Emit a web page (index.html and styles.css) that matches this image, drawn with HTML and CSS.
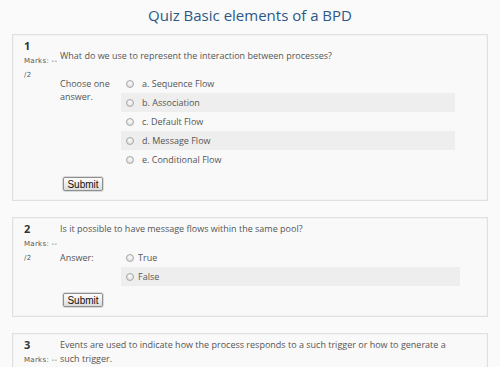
FILE: index.html
```html
<!DOCTYPE html>
<html>
<head>
<meta charset="utf-8">
<link rel="stylesheet" href="styles.css">
</head>
<body>
<h2 class="title">Quiz Basic elements of a BPD</h2>

<div class="que">
  <div class="info">
    <div class="no">1</div>
    <div class="grade">Marks: --<br>/2</div>
  </div>
  <div class="content">
    <div class="qtext qtext-low">What do we use to represent the interaction between processes?</div>
    <div class="ablock ablock-first">
      <div class="prompt">Choose one<br>answer.</div>
      <div class="answer">
        <div class="opt"><span class="radio"></span><span class="label">a. Sequence Flow</span></div>
        <div class="opt opt-alt"><span class="radio"></span><span class="label">b. Association</span></div>
        <div class="opt"><span class="radio"></span><span class="label">c. Default Flow</span></div>
        <div class="opt opt-alt"><span class="radio"></span><span class="label">d. Message Flow</span></div>
        <div class="opt"><span class="radio"></span><span class="label">e. Conditional Flow</span></div>
      </div>
    </div>
    <div class="submit"><button class="btn">Submit</button></div>
  </div>
</div>

<div class="que">
  <div class="info">
    <div class="no">2</div>
    <div class="grade">Marks: --<br>/2</div>
  </div>
  <div class="content">
    <div class="qtext">Is it possible to have message flows within the same pool?</div>
    <div class="ablock ablock-tf">
      <div class="prompt">Answer:</div>
      <div class="answer answer-tf">
        <div class="opt"><span class="radio radio-tf"></span><span class="label">True</span></div>
        <div class="opt opt-alt"><span class="radio radio-tf"></span><span class="label">False</span></div>
      </div>
    </div>
    <div class="submit submit-tf"><button class="btn">Submit</button></div>
  </div>
</div>

<div class="que">
  <div class="info">
    <div class="no">3</div>
    <div class="grade">Marks: --<br>/2</div>
  </div>
  <div class="content">
    <div class="qtext">Events are used to indicate how the process responds to a such trigger or how to generate a such trigger.</div>
  </div>
</div>
</body>
</html>
```

FILE: styles.css
```css
html, body {
  margin: 0;
  padding: 0;
  background: #fafafa;
}
body {
  font-family: "Open Sans", "DejaVu Sans", sans-serif;
  color: #555;
  font-size: 9px;
  height: 367px;
  overflow: hidden;
}
.title {
  margin: 0;
  height: 34px;
  padding-top: 4px;
  box-sizing: border-box;
  text-align: center;
  font-weight: normal;
  font-size: 15px;
  line-height: 22px;
  color: #2c5886;
}
.que {
  margin: 0 12px 16px 12px;
  width: 476px;
  border: 1px solid #e0e0e0;
  box-shadow: inset 0 0 0 1px #f3f3f3;
  background: #f9f9f9;
  display: flex;
  padding: 4px 0 9px 11px;
  box-sizing: border-box;
}
.info {
  width: 36px;
  flex: none;
}
.no {
  font-size: 11px;
  font-weight: bold;
  color: #333;
  line-height: 14px;
}
.grade {
  font-family: "DejaVu Sans", sans-serif;
  font-size: 7px;
  letter-spacing: 0.3px;
  line-height: 14px;
  margin-top: 1px;
  white-space: nowrap;
}
.content {
  flex: 1;
  padding-right: 24px;
}
.qtext {
  line-height: 14px;
}
.qtext-low {
  margin-top: 10px;
}
.ablock {
  display: flex;
}
.ablock-first {
  margin-top: 11px;
}
.ablock-tf {
  margin-top: 12px;
}
.prompt {
  width: 61px;
  flex: none;
  line-height: 13px;
  padding-top: 3px;
}
.answer {
  width: 334px;
}
.answer-tf {
  width: 339px;
}
.opt {
  height: 19px;
  display: flex;
  align-items: center;
  padding-left: 5px;
}
.opt-alt {
  background: #eeeeee;
}
.radio {
  width: 6px;
  height: 6px;
  border-radius: 50%;
  border: 1px solid #a8a8a8;
  background: radial-gradient(circle at 50% 35%, #fdfdfd, #d4d4d4);
  margin-right: 8px;
  flex: none;
}
.radio-tf {
  margin-right: 4px;
}
.submit {
  display: flex;
  margin-top: 8px;
  padding-left: 3px;
}
.submit-tf {
  margin-top: 7px;
}
.btn {
  font-family: "Liberation Sans", Arial, sans-serif;
  font-size: 10px;
  color: #111;
  padding: 0 3px;
  width: 40px;
  height: 14px;
  line-height: 11px;
  border: 1px solid #8e8e8e;
  border-radius: 2px;
  background: linear-gradient(#fdfdfd, #dcdcdc);
  box-shadow: 0 0 0 1px #dadada;
}
```
